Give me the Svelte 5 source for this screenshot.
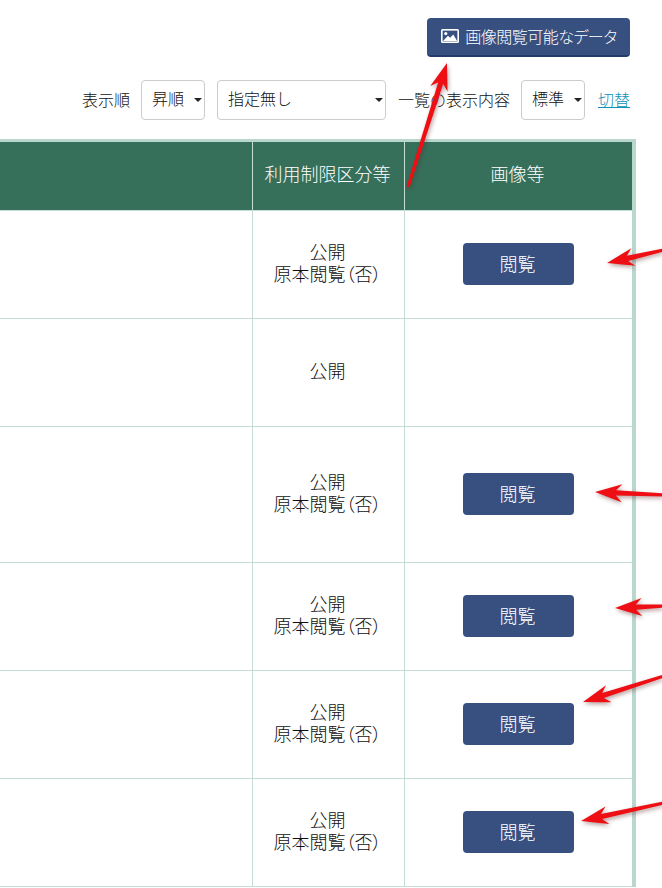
<script lang="ts">
  const rows = [
    { height: 108, lines: ['公開', '原本閲覧（否）'], view: true },
    { height: 108, lines: ['公開'], view: false },
    { height: 136, lines: ['公開', '原本閲覧（否）'], view: true },
    { height: 108, lines: ['公開', '原本閲覧（否）'], view: true },
    { height: 108, lines: ['公開', '原本閲覧（否）'], view: true },
    { height: 108, lines: ['公開', '原本閲覧（否）'], view: true }
  ];

  // annotation arrows: [tailX, tailY, tipX, tipY]
  const arrows = [
    [408, 187, 447, 63],
    [664, 250, 607, 263],
    [664, 495, 595, 492],
    [664, 606, 615, 608],
    [664, 676, 583, 702],
    [664, 803, 581, 821]
  ];

  function arrowPoints([x1, y1, x2, y2]: number[]) {
    const len = Math.hypot(x2 - x1, y2 - y1);
    const ux = (x2 - x1) / len;
    const uy = (y2 - y1) / len;
    const nx = -uy;
    const ny = ux;
    const at = (along: number, side: number) =>
      `${(x2 - ux * along + nx * side).toFixed(1)},${(y2 - uy * along + ny * side).toFixed(1)}`;
    return [
      at(0, 0),
      at(27, 9),
      at(21, 2.6),
      at(len, 1.5),
      at(len, -1.5),
      at(21, -2.6),
      at(27, -9)
    ].join(' ');
  }
</script>

<div class="page">
  <div class="actions">
    <button type="button" class="btn btn-images">
      <svg class="picture" viewBox="0 0 18 14" width="18" height="14" aria-hidden="true">
        <rect x="0" y="0" width="18" height="14" rx="1.5" fill="#fff" />
        <rect x="1.6" y="1.6" width="14.8" height="10.8" fill="#38507f" />
        <circle cx="4.8" cy="4.6" r="1.6" fill="#fff" />
        <path d="M2 12 7 6.8l2.2 2 3-3.4 4 6.6z" fill="#fff" />
      </svg>
      <span>画像閲覧可能なデータ</span>
    </button>
  </div>

  <div class="filters">
    <span class="label">表示順</span>
    <div class="select w-order"><select><option>昇順</option></select></div>
    <div class="select w-field"><select><option>指定無し</option></select></div>
    <span class="label">一覧の表示内容</span>
    <div class="select w-order last"><select><option>標準</option></select></div>
    <a href="#top" class="switch">切替</a>
  </div>

  <div class="table">
    <div class="row head">
      <div class="cell"></div>
      <div class="cell">利用制限区分等</div>
      <div class="cell">画像等</div>
    </div>
    {#each rows as row}
      <div class="row" style="height: {row.height}px">
        <div class="cell"></div>
        <div class="cell text">
          {#each row.lines as line}
            <span>{line}</span>
          {/each}
        </div>
        <div class="cell">
          {#if row.view}
            <button type="button" class="btn btn-view">閲覧</button>
          {/if}
        </div>
      </div>
    {/each}
  </div>

  <svg class="arrows" viewBox="0 0 662 888" width="662" height="888" aria-hidden="true">
    {#each arrows as arrow}
      <polygon points={arrowPoints(arrow)} fill="#ee0f14" />
    {/each}
  </svg>
</div>

<style>
  :global(body) {
    margin: 0;
    background: #fff;
  }

  .page {
    position: relative;
    width: 662px;
    height: 888px;
    overflow: hidden;
    font-family: "Noto Sans CJK JP", "Liberation Sans", sans-serif;
    font-weight: 300;
    font-size: 16px;
    color: #111;
  }

  .actions {
    display: flex;
    justify-content: flex-end;
    padding: 18px 32px 0 0;
  }

  .btn {
    font: inherit;
    color: #fff;
    background: #38507f;
    border: 0;
    border-radius: 4px;
    padding: 0;
    display: flex;
    align-items: center;
    justify-content: center;
  }

  .btn-images {
    width: 203px;
    height: 39px;
    gap: 6px;
    padding: 0 0 1px 1px;
    border-bottom: 2px solid #263c68;
    font-feature-settings: "palt";
    letter-spacing: -0.5px;
  }

  .picture {
    flex: none;
  }

  .filters {
    display: flex;
    align-items: center;
    justify-content: flex-end;
    height: 40px;
    margin-top: 23px;
    padding-right: 32px;
  }

  .label {
    white-space: nowrap;
    margin-right: 11px;
    padding-bottom: 3px;
  }

  .select {
    position: relative;
    height: 40px;
    box-sizing: border-box;
    border: 1px solid #ccc;
    border-radius: 4px;
    background: #fff;
    margin-right: 12px;
  }

  .select.last {
    margin-right: 13px;
  }

  .select::after {
    content: "";
    position: absolute;
    right: 2px;
    top: 17px;
    border-top: 4px solid #222;
    border-left: 4px solid transparent;
    border-right: 4px solid transparent;
  }

  .w-order {
    width: 64px;
  }

  .w-field {
    width: 169px;
  }

  .select select {
    appearance: none;
    width: 100%;
    height: 100%;
    border: 0;
    outline: 0;
    background: transparent;
    font: inherit;
    color: inherit;
    padding: 0 0 4px 10px;
  }

  .switch {
    color: #0f93b5;
    text-decoration: underline;
    white-space: nowrap;
    padding-bottom: 3px;
  }

  .table {
    width: 632px;
    margin-top: 19px;
    border-top: 3px solid #b9d7cd;
    border-right: 4px solid #b9d7cd;
    font-size: 18px;
  }

  .row {
    display: grid;
    grid-template-columns: 252px 152px 228px;
    box-sizing: border-box;
    border-bottom: 1px solid #c6ddd6;
  }

  .head {
    height: 69px;
    background: #36705b;
    color: #fff;
    border-bottom: 1px solid #c6ddd6;
  }

  .head .cell {
    padding: 0 2px 7px 0;
  }

  .cell {
    display: flex;
    flex-direction: column;
    align-items: center;
    justify-content: center;
    border-left: 1px solid #c6ddd6;
    text-align: center;
  }

  .cell:first-child {
    border-left: 0;
  }

  .text {
    line-height: 22px;
    padding: 0 2px 5px 0;
    font-feature-settings: "palt";
  }

  .btn-view {
    width: 111px;
    height: 42px;
    margin-bottom: 2px;
    font-size: 18px;
    padding: 0 2px 2px 0;
  }

  .arrows {
    position: absolute;
    left: 0;
    top: 0;
    pointer-events: none;
    filter: drop-shadow(1px 2px 2px rgba(90, 30, 30, 0.45));
  }
</style>
